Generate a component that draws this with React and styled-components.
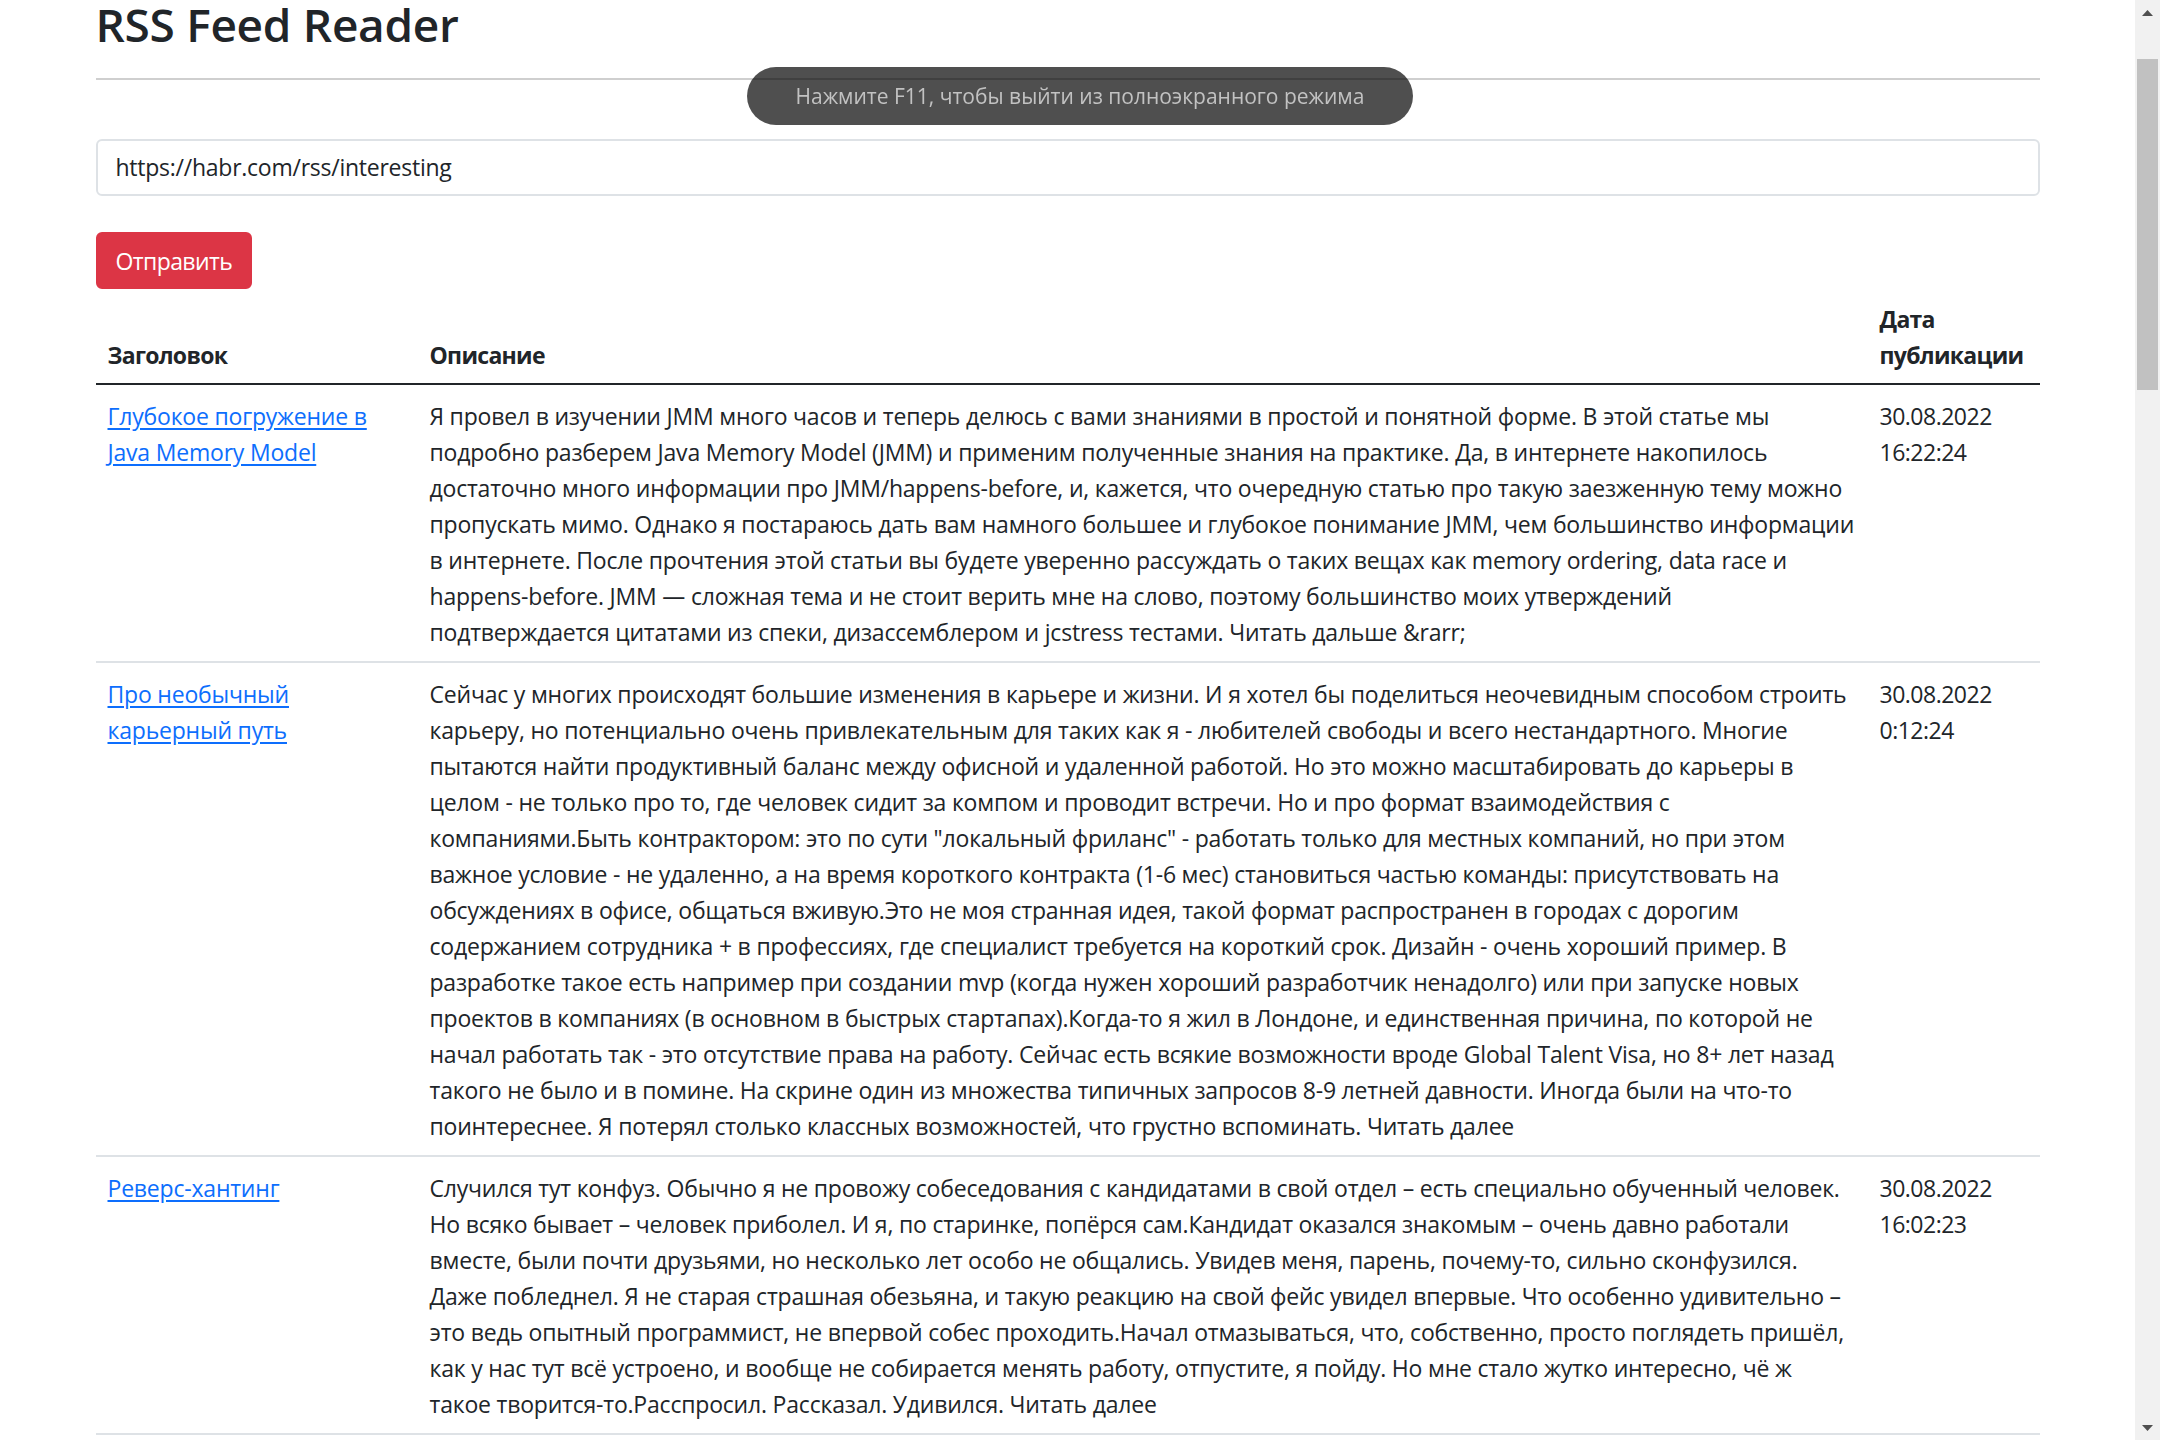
import React from "react";
import styled, { createGlobalStyle } from "styled-components";

const FONT = `"Open Sans", "Noto Sans", sans-serif`;
const LS = "-0.2px";

const GlobalStyle = createGlobalStyle`
  html, body { margin: 0; padding: 0; height: 100%; overflow: hidden; background: #fff; }
  body { font-family: ${FONT}; color: #212529; font-size: 23px; line-height: 36px; letter-spacing: ${LS}; }
  #root { height: 100%; }
`;

const Viewport = styled.div`
  display: flex;
  height: 100vh;
  overflow: hidden;
`;

const Page = styled.main`
  flex: 1;
  min-width: 0;
  overflow: hidden;
`;

const Container = styled.div`
  box-sizing: border-box;
  width: 1980px;
  max-width: 100%;
  margin: 0 auto;
  padding: 0 18px;
`;

const Title = styled.h1`
  margin: -4px 0 24px;
  font-size: 46px;
  line-height: 57.6px;
  font-weight: 600;
  letter-spacing: -0.3px;
`;

const Divider = styled.hr`
  margin: 0;
  border: 0;
  height: 2px;
  background: #cfcfcf;
`;

const Form = styled.form`
  display: flex;
  flex-direction: column;
  align-items: flex-start;
  gap: 36px;
  margin-top: 59px;
`;

const UrlInput = styled.input`
  box-sizing: border-box;
  width: 100%;
  height: 57px;
  padding: 9px 18px;
  border: 2px solid #dee2e6;
  border-radius: 6px;
  font: inherit;
  letter-spacing: -0.25px;
  color: #212529;
  outline: none;
`;

const SubmitButton = styled.button`
  box-sizing: border-box;
  height: 57px;
  padding: 9px 18px;
  border: 2px solid #dc3545;
  border-radius: 6px;
  background: #dc3545;
  color: #fff;
  font: inherit;
  letter-spacing: -0.6px;
  cursor: pointer;
`;

const FeedTable = styled.table`
  width: 100%;
  border-collapse: collapse;
  table-layout: fixed;
`;

const Col = styled.col`
  width: ${(p) => p.$w}px;
`;

const HeadCell = styled.th`
  padding: 12px 12px 10px;
  text-align: left;
  vertical-align: bottom;
  font-weight: 700;
  letter-spacing: -0.7px;
  border-bottom: 2px solid #212529;
`;

const Cell = styled.td`
  padding: 13px 12px 11px;
  vertical-align: top;
  border-bottom: 2px solid #dee2e6;
  white-space: ${(p) => (p.$lines ? "nowrap" : "normal")};
  letter-spacing: ${(p) => (p.$digits ? "-0.5px" : LS)};
`;

const ItemLink = styled.a`
  color: #0d6efd;
  text-decoration: underline;
  text-underline-offset: 3px;
`;

const Bubble = styled.div`
  position: fixed;
  top: 67px;
  left: 50%;
  transform: translateX(-50%);
  width: 666px;
  height: 58px;
  border-radius: 29px;
  background: rgba(0, 0, 0, 0.69);
  color: #c2c2c2;
  display: flex;
  align-items: center;
  justify-content: center;
  font-size: 21px;
  letter-spacing: 0;
`;

const Scrollbar = styled.div`
  width: 25px;
  flex: none;
  display: flex;
  flex-direction: column;
  background: #f1f1f1;
`;

const ArrowButton = styled.div`
  height: 25px;
  display: flex;
  align-items: center;
  justify-content: center;
`;

const Track = styled.div`
  flex: 1;
  padding: 34px 2px 0;
`;

const Thumb = styled.div`
  height: 331px;
  background: #c1c1c1;
`;

const items = [
  {
    title: "Глубокое погружение в Java Memory Model",
    lines: [
      "Я провел в изучении JMM много часов и теперь делюсь с вами знаниями в простой и понятной форме. В этой статье мы",
      "подробно разберем Java Memory Model (JMM) и применим полученные знания на практике. Да, в интернете накопилось",
      "достаточно много информации про JMM/happens-before, и, кажется, что очередную статью про такую заезженную тему можно",
      "пропускать мимо. Однако я постараюсь дать вам намного большее и глубокое понимание JMM, чем большинство информации",
      "в интернете. После прочтения этой статьи вы будете уверенно рассуждать о таких вещах как memory ordering, data race и",
      "happens-before. JMM — сложная тема и не стоит верить мне на слово, поэтому большинство моих утверждений",
      "подтверждается цитатами из спеки, дизассемблером и jcstress тестами. Читать дальше &rarr;",
    ],
    date: "30.08.2022 16:22:24",
  },
  {
    title: "Про необычный карьерный путь",
    lines: [
      "Сейчас у многих происходят большие изменения в карьере и жизни. И я хотел бы поделиться неочевидным способом строить",
      "карьеру, но потенциально очень привлекательным для таких как я - любителей свободы и всего нестандартного. Многие",
      "пытаются найти продуктивный баланс между офисной и удаленной работой. Но это можно масштабировать до карьеры в",
      "целом - не только про то, где человек сидит за компом и проводит встречи. Но и про формат взаимодействия с",
      "компаниями.Быть контрактором: это по сути \"локальный фриланс\" - работать только для местных компаний, но при этом",
      "важное условие - не удаленно, а на время короткого контракта (1-6 мес) становиться частью команды: присутствовать на",
      "обсуждениях в офисе, общаться вживую.Это не моя странная идея, такой формат распространен в городах с дорогим",
      "содержанием сотрудника + в профессиях, где специалист требуется на короткий срок. Дизайн - очень хороший пример. В",
      "разработке такое есть например при создании mvp (когда нужен хороший разработчик ненадолго) или при запуске новых",
      "проектов в компаниях (в основном в быстрых стартапах).Когда-то я жил в Лондоне, и единственная причина, по которой не",
      "начал работать так - это отсутствие права на работу. Сейчас есть всякие возможности вроде Global Talent Visa, но 8+ лет назад",
      "такого не было и в помине. На скрине один из множества типичных запросов 8-9 летней давности. Иногда были на что-то",
      "поинтереснее. Я потерял столько классных возможностей, что грустно вспоминать. Читать далее",
    ],
    date: "30.08.2022 0:12:24",
  },
  {
    title: "Реверс-хантинг",
    lines: [
      "Случился тут конфуз. Обычно я не провожу собеседования с кандидатами в свой отдел – есть специально обученный человек.",
      "Но всяко бывает – человек приболел. И я, по старинке, попёрся сам.Кандидат оказался знакомым – очень давно работали",
      "вместе, были почти друзьями, но несколько лет особо не общались. Увидев меня, парень, почему-то, сильно сконфузился.",
      "Даже побледнел. Я не старая страшная обезьяна, и такую реакцию на свой фейс увидел впервые. Что особенно удивительно –",
      "это ведь опытный программист, не впервой собес проходить.Начал отмазываться, что, собственно, просто поглядеть пришёл,",
      "как у нас тут всё устроено, и вообще не собирается менять работу, отпустите, я пойду. Но мне стало жутко интересно, чё ж",
      "такое творится-то.Расспросил. Рассказал. Удивился. Читать далее",
    ],
    date: "30.08.2022 16:02:23",
  },
];

const ArrowIcon = ({ down }) => (
  <svg width="11" height="6" viewBox="0 0 11 6">
    <path d={down ? "M0 0 H11 L5.5 6 Z" : "M0 6 H11 L5.5 0 Z"} fill="#505050" />
  </svg>
);

export default function App() {
  return (
    <Viewport>
      <GlobalStyle />
      <Page>
        <Container>
          <Title>RSS Feed Reader</Title>
          <Divider />
          <Form onSubmit={(e) => e.preventDefault()}>
            <UrlInput defaultValue="https://habr.com/rss/interesting" />
            <SubmitButton type="submit">Отправить</SubmitButton>
          </Form>
          <FeedTable>
            <colgroup>
              <Col $w={322} />
              <Col $w={1450} />
              <Col $w={172} />
            </colgroup>
            <thead>
              <tr>
                <HeadCell>Заголовок</HeadCell>
                <HeadCell>Описание</HeadCell>
                <HeadCell>Дата публикации</HeadCell>
              </tr>
            </thead>
            <tbody>
              {items.map((it) => (
                <tr key={it.title}>
                  <Cell>
                    <ItemLink href="#">{it.title}</ItemLink>
                  </Cell>
                  <Cell $lines>
                    {it.lines.map((l, i) => (
                      <React.Fragment key={i}>
                        {i > 0 && <br />}
                        {l}
                      </React.Fragment>
                    ))}
                  </Cell>
                  <Cell $digits>{it.date}</Cell>
                </tr>
              ))}
            </tbody>
          </FeedTable>
        </Container>
      </Page>
      <Scrollbar>
        <ArrowButton>
          <ArrowIcon />
        </ArrowButton>
        <Track>
          <Thumb />
        </Track>
        <ArrowButton>
          <ArrowIcon down />
        </ArrowButton>
      </Scrollbar>
      <Bubble>Нажмите F11, чтобы выйти из полноэкранного режима</Bubble>
    </Viewport>
  );
}
